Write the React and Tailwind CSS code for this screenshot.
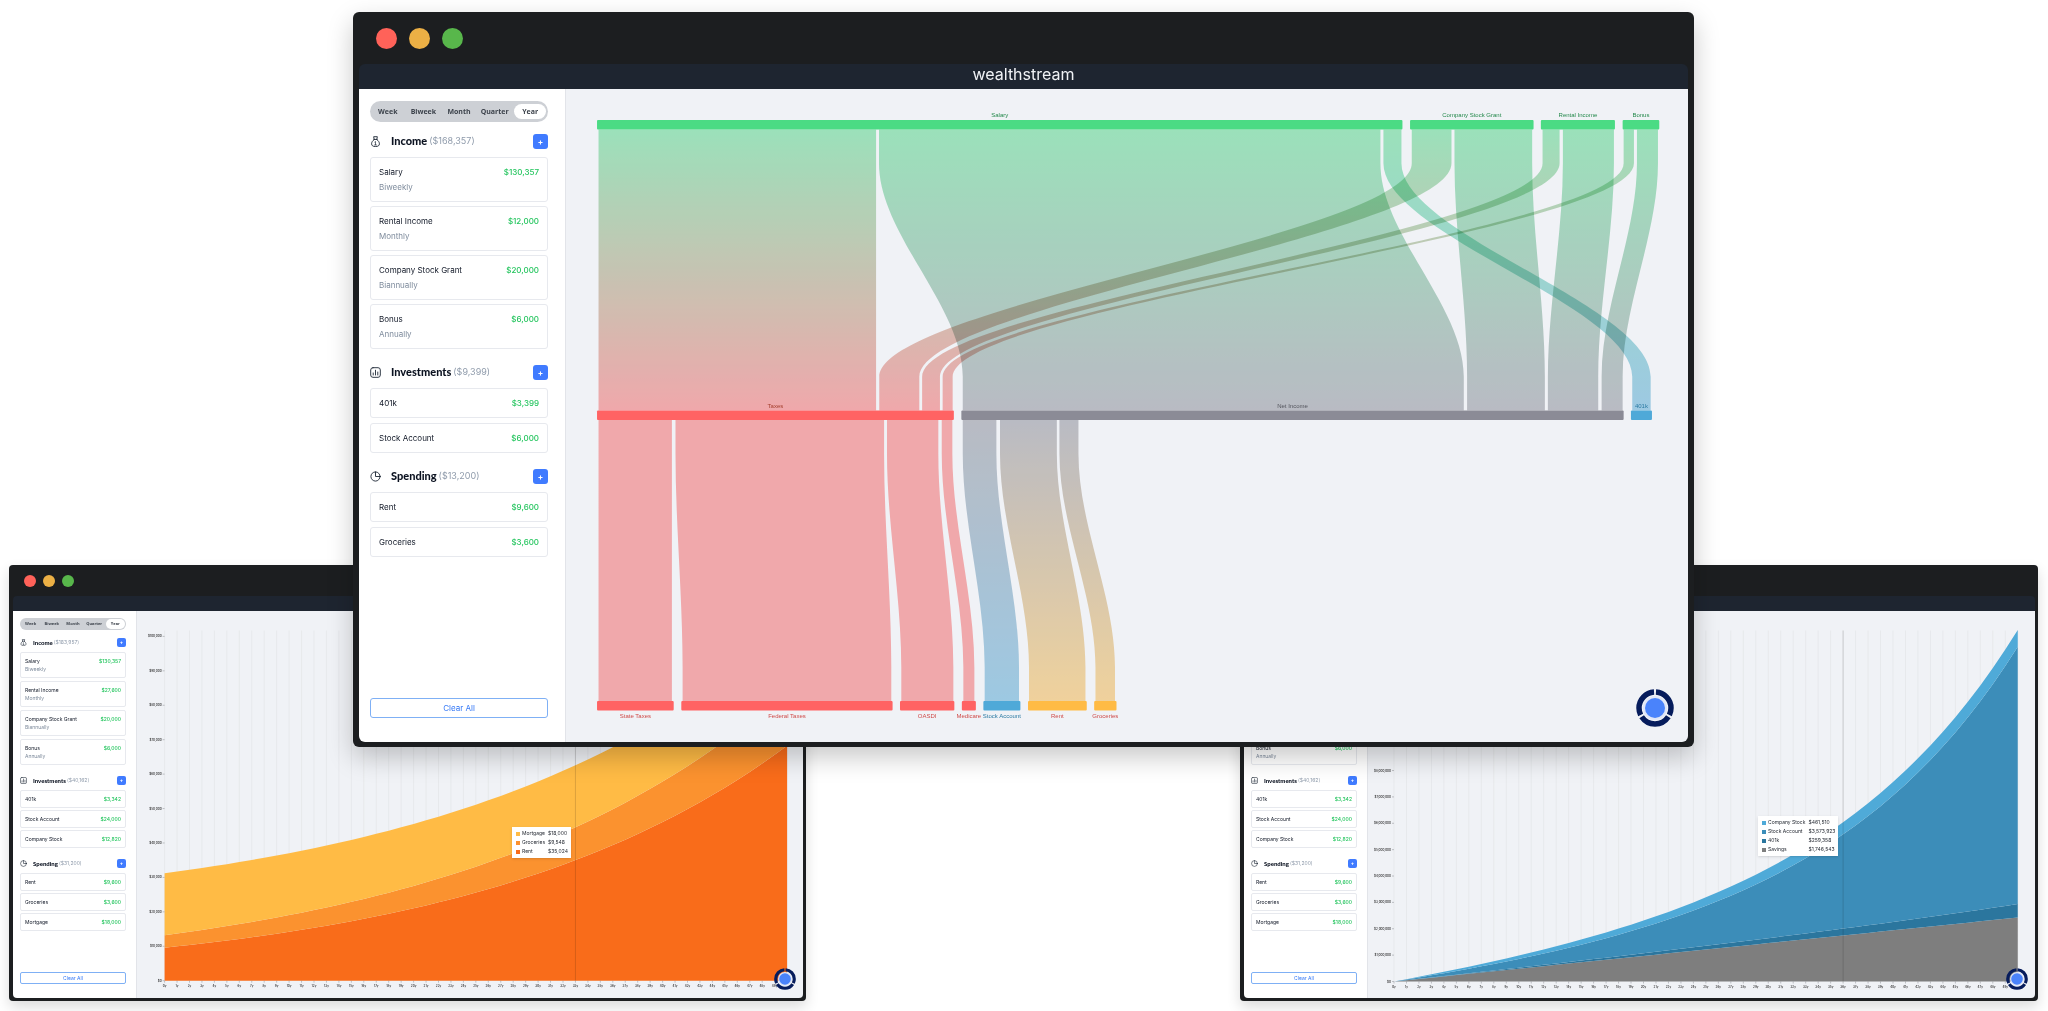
import React, { useState } from 'react';
import clsx from 'clsx';

const PERIODS = ['Week', 'Biweek', 'Month', 'Quarter', 'Year'];

const overviewGroups = [
  {
    title: 'Income',
    total: '$168,357',
    items: [
      { name: 'Salary', amount: '$130,357', every: 'Biweekly' },
      { name: 'Rental Income', amount: '$12,000', every: 'Monthly' },
      { name: 'Company Stock Grant', amount: '$20,000', every: 'Biannually' },
      { name: 'Bonus', amount: '$6,000', every: 'Annually' },
    ],
  },
  {
    title: 'Investments',
    total: '$9,399',
    items: [
      { name: '401k', amount: '$3,399' },
      { name: 'Stock Account', amount: '$6,000' },
    ],
  },
  {
    title: 'Spending',
    total: '$13,200',
    items: [
      { name: 'Rent', amount: '$9,600' },
      { name: 'Groceries', amount: '$3,600' },
    ],
  },
];

const projectionGroups = [
  {
    title: 'Income',
    total: '$183,957',
    items: [
      { name: 'Salary', amount: '$130,357', every: 'Biweekly' },
      { name: 'Rental Income', amount: '$27,600', every: 'Monthly' },
      { name: 'Company Stock Grant', amount: '$20,000', every: 'Biannually' },
      { name: 'Bonus', amount: '$6,000', every: 'Annually' },
    ],
  },
  {
    title: 'Investments',
    total: '$40,162',
    items: [
      { name: '401k', amount: '$3,342' },
      { name: 'Stock Account', amount: '$24,000' },
      { name: 'Company Stock', amount: '$12,820' },
    ],
  },
  {
    title: 'Spending',
    total: '$31,200',
    items: [
      { name: 'Rent', amount: '$9,600' },
      { name: 'Groceries', amount: '$3,600' },
      { name: 'Mortgage', amount: '$18,000' },
    ],
  },
];

function GroupIcon({ title, className }) {
  return (
    <svg
      viewBox="0 0 24 24"
      className={className}
      fill="none"
      stroke="#1f2937"
      strokeWidth="2"
      strokeLinecap="round"
      strokeLinejoin="round"
      aria-hidden="true"
    >
      {title === 'Income' && (
        <>
          <path d="M9 7 8 1.5h8L15 7" />
          <path d="M8.5 7.5h7" />
          <path d="M9 8c-3.5 2.500-5.500 5.500-5.500 9 0 3.800 2.500 6 8.500 6s8.500-2.200 8.500-6c0-3.500-2-6.500-5.500-9" />
          <path d="M10.500 13 12 12v7M10 19.500h4" strokeWidth="1.500" />
        </>
      )}
      {title === 'Investments' && (
        <>
          <rect x="1.500" y="1.500" width="21" height="21" rx="5" />
          <path d="M7 13v4.500M12 7v10.500M17 11v6.500" />
        </>
      )}
      {title === 'Spending' && (
        <>
          <circle cx="12" cy="12" r="10" />
          <path d="M12 2v10h10" />
        </>
      )}
    </svg>
  );
}

function PeriodPicker({ small }) {
  const [period, setPeriod] = useState('Year');

  return (
    <div
      className={clsx(
        'grid grid-cols-5 rounded-full bg-[#cdd0d5] font-["Open_Sans",sans-serif] font-bold text-[#3d434c]',
        small ? 'h-3 py-px text-[4px] leading-[10px]' : 'h-[21px] py-[3px] text-[7px] leading-[15px]'
      )}
    >
      {PERIODS.map((p) => (
        <button
          key={p}
          type="button"
          onClick={() => setPeriod(p)}
          className={clsx('rounded-full text-center', small ? 'mx-px' : 'mx-[2px]', p === period && 'bg-white')}
        >
          {p}
        </button>
      ))}
    </div>
  );
}

function Group({ group, small }) {
  const twoLine = group.items.some((i) => i.every);

  return (
    <section>
      <div className={clsx('flex items-center', small ? 'mb-[5px] h-[9px]' : 'mb-2 h-[15px]')}>
        <GroupIcon title={group.title} className={small ? 'size-[7px]' : 'size-[11px]'} />
        <h2
          className={clsx(
            'font-["Lato",sans-serif] font-black text-[#0b1220]',
            small ? 'ml-[6px] text-[6px]' : 'ml-[10px] text-[11px]'
          )}
        >
          {group.title}
        </h2>
        <span
          className={clsx(
            'font-["Inter",sans-serif] text-[#8f9bab]',
            small ? 'ml-px text-[5px]' : 'ml-[2px] pb-[2px] text-[9px]'
          )}
        >
          ({group.total})
        </span>
        <button
          type="button"
          aria-label={`Add ${group.title}`}
          className={clsx(
            'ml-auto flex items-center justify-center bg-[#407bff] font-bold text-white',
            small ? 'size-[9px] rounded-[2px] text-[5px]' : 'size-[15px] rounded-[3px] text-[8px]'
          )}
        >
          +
        </button>
      </div>
      <ul className={clsx('flex flex-col', small ? (twoLine ? 'gap-[3px]' : 'gap-[2px]') : twoLine ? 'gap-1' : 'gap-[5px]')}>
        {group.items.map((item) => (
          <li
            key={item.name}
            className={clsx(
              'border border-[#e7e9ee]',
              small ? 'rounded-[2px] px-1 py-1 text-[5px] leading-[8px]' : 'rounded-[3px] px-2 py-[7px] text-[8px] leading-[14px]'
            )}
          >
            <div className="flex justify-between">
              <span className="text-[#111827]">{item.name}</span>
              <span className="font-medium text-[#24c55e]">{item.amount}</span>
            </div>
            {item.every && <div className={clsx('text-[#7f8c9d]', !small && 'mt-px')}>{item.every}</div>}
          </li>
        ))}
      </ul>
    </section>
  );
}

function Sidebar({ groups, small }) {
  return (
    <aside
      className={clsx(
        'flex shrink-0 flex-col border-r border-[#e2e4e9] bg-white',
        small ? 'w-[124px] pt-[7px] pr-[10px] pb-[14px] pl-[7px]' : 'w-[207px] pt-3 pr-[17px] pb-6 pl-[11px]'
      )}
    >
      <PeriodPicker small={small} />
      <div className={clsx('flex flex-col', small ? 'mt-2 gap-[11px]' : 'mt-3 gap-4')}>
        {groups.map((g) => (
          <Group key={g.title} group={g} small={small} />
        ))}
      </div>
      <button
        type="button"
        className={clsx(
          'mt-auto border border-[#7fb0f5] text-[#3478f6]',
          small ? 'h-3 rounded-[2px] text-[5px] leading-[10px]' : 'h-5 rounded-[3px] text-[8px] leading-[18px]'
        )}
      >
        Clear All
      </button>
    </aside>
  );
}

function HelpButton({ small }) {
  return (
    <button
      type="button"
      aria-label="Help"
      className={clsx('absolute', small ? 'right-[7px] bottom-2 size-[22px]' : 'right-[14px] bottom-[15px] size-[38px]')}
    >
      <svg viewBox="0 0 38 38" className="size-full">
        <circle cx="19" cy="19" r="12" fill="#dfe6f8" />
        <circle cx="19" cy="19" r="10" fill="#4a83fb" />
        <circle
          cx="19"
          cy="19"
          r="16"
          fill="none"
          stroke="#061c5c"
          strokeWidth="5.500"
          pathLength="300"
          strokeDasharray="94 6"
          strokeDashoffset="-3"
          transform="rotate(-90 19 19)"
        />
      </svg>
    </button>
  );
}

function Window({ title, groups, small, className, children }) {
  return (
    <div
      className={clsx(
        'absolute bg-[#1c1e20]',
        small
          ? 'rounded-[4px] pr-[3px] pb-[3px] pl-1 shadow-[0_6px_14px_rgba(0,0,0,0.14)]'
          : 'rounded-[6px] px-[6px] pb-[5px] shadow-[0_10px_26px_rgba(0,0,0,0.22)]',
        className
      )}
    >
      <div className={clsx('flex items-center', small ? 'h-[31px] gap-[7px] pl-[11px]' : 'h-[52px] gap-3 pl-[17px]')}>
        {['bg-[#ff6259]', 'bg-[#ecb045]', 'bg-[#58b74b]'].map((c) => (
          <span key={c} className={clsx('rounded-full', c, small ? 'size-3' : 'size-[21px]')} />
        ))}
      </div>
      <header
        className={clsx(
          'flex justify-center bg-[#1e2530] font-["Inter",sans-serif] text-[#f0f2f5]',
          small ? 'h-[15px] rounded-t-[4px] text-[9px]' : 'h-[25px] rounded-t-[6px] text-[16px] leading-[21px]'
        )}
      >
        {title}
      </header>
      <div className={clsx('flex overflow-hidden', small ? 'rounded-b-[4px]' : 'rounded-b-[6px]')}>
        <Sidebar groups={groups} small={small} />
        <main className="relative min-w-0 flex-1 bg-[#f0f2f6]">
          {children}
          <HelpButton small={small} />
        </main>
      </div>
    </div>
  );
}

/* ---------- sankey ---------- */

const GREEN = '#4bdb84';
const RED = '#ff6363';
const GREY = '#8b8b96';
const BLUE = '#4fa9d8';
const YELLOW = '#ffbb45';

const NODE_H = 9.5;
const ROWS = [31, 321.25, 611.5];

const nodes = [
  { name: 'Salary', row: 0, x: [31, 835.7], color: GREEN, text: '#24894b' },
  { name: 'Company Stock Grant', row: 0, x: [843.3, 966.7], color: GREEN, text: '#24894b' },
  { name: 'Rental Income', row: 0, x: [974, 1048], color: GREEN, text: '#24894b' },
  { name: 'Bonus', row: 0, x: [1055.7, 1092.3], color: GREEN, text: '#24894b' },
  { name: 'Taxes', row: 1, x: [31, 387.5], color: RED, text: '#a5402f' },
  { name: 'Net Income', row: 1, x: [395, 1056.7], color: GREY, text: '#55565e' },
  { name: '401k', row: 1, x: [1064, 1085], color: BLUE, text: '#2c7ba3' },
  { name: 'State Taxes', row: 2, x: [31, 107.6], color: RED, text: '#cf4a48' },
  { name: 'Federal Taxes', row: 2, x: [115.2, 326.3], color: RED, text: '#cf4a48' },
  { name: 'OASDI', row: 2, x: [333.7, 388], color: RED, text: '#cf4a48' },
  { name: 'Medicare', row: 2, x: [395.5, 409.5], color: RED, text: '#cf4a48' },
  { name: 'Stock Account', row: 2, x: [417, 454], color: BLUE, text: '#2c7ba3' },
  { name: 'Rent', row: 2, x: [461.6, 520.3], color: YELLOW, text: '#cf4a48' },
  { name: 'Groceries', row: 2, x: [527.7, 550], color: YELLOW, text: '#cf4a48' },
];

const links = [
  { row: 0, a: [32.5, 309.8], b: [32.5, 309.8], from: GREEN, to: RED },
  { row: 0, a: [312.7, 813.7], b: [396.4, 897], from: GREEN, to: GREY },
  { row: 0, a: [816.7, 834.7], b: [1065.3, 1083.7], from: GREEN, to: BLUE },
  { row: 0, a: [845, 884.7], b: [313, 353], from: GREEN, to: RED },
  { row: 0, a: [887.7, 965.3], b: [900.3, 978], from: GREEN, to: GREY },
  { row: 0, a: [975.7, 992.7], b: [355.8, 373.6], from: GREEN, to: RED },
  { row: 0, a: [996, 1047], b: [981, 1031.3], from: GREEN, to: GREY },
  { row: 0, a: [1056.7, 1067], b: [376.3, 386.3], from: GREEN, to: RED },
  { row: 0, a: [1070, 1091], b: [1034.7, 1055.7], from: GREEN, to: GREY },
  { row: 1, a: [32.5, 105.8], b: [32.5, 105.8], from: RED, to: RED },
  { row: 1, a: [109.4, 317.8], b: [116.5, 325], from: RED, to: RED },
  { row: 1, a: [320.7, 372], b: [335, 387], from: RED, to: RED },
  { row: 1, a: [375.4, 386], b: [397, 408], from: RED, to: RED },
  { row: 1, a: [396.4, 430], b: [418.3, 452.6], from: GREY, to: BLUE },
  { row: 1, a: [433.6, 490.4], b: [462.6, 519], from: GREY, to: YELLOW },
  { row: 1, a: [493, 512], b: [529, 548.5], from: GREY, to: YELLOW },
];

// straight run at both ends, smooth curve between them
function linkPath({ row, a, b }) {
  const top = ROWS[row] + NODE_H;
  const bottom = ROWS[row + 1];
  const run = (bottom - top) * 0.12;
  const y1 = top + run;
  const y2 = bottom - run;
  const k = (y2 - y1) / 3;
  return [
    `M${a[0]} ${top}V${y1}`,
    `C${a[0]} ${y1 + k} ${b[0]} ${y2 - k} ${b[0]} ${y2}`,
    `V${bottom}H${b[1]}V${y2}`,
    `C${b[1]} ${y2 - k} ${a[1]} ${y1 + k} ${a[1]} ${y1}`,
    `V${top}Z`,
  ].join('');
}

function SankeyChart() {
  return (
    <svg viewBox="0 0 1121 652" className="block h-auto w-full" role="img" aria-label="Cash flow">
      <defs>
        {links.map((l, i) => (
          <linearGradient
            key={i}
            id={`flow-${i}`}
            gradientUnits="userSpaceOnUse"
            x1="0"
            x2="0"
            y1={ROWS[l.row] + NODE_H}
            y2={ROWS[l.row + 1]}
          >
            <stop offset="0" stopColor={l.from} />
            <stop offset="1" stopColor={l.to} />
          </linearGradient>
        ))}
      </defs>
      <g>
        {links.map((l, i) => (
          <path key={i} d={linkPath(l)} fill={`url(#flow-${i})`} className="opacity-50 mix-blend-multiply" />
        ))}
      </g>
      {nodes.map((n) => (
        <g key={n.name}>
          <rect x={n.x[0]} y={ROWS[n.row]} width={n.x[1] - n.x[0]} height={NODE_H} rx="1" fill={n.color} />
          <text
            x={(n.x[0] + n.x[1]) / 2}
            y={n.row === 2 ? ROWS[2] + 17 : ROWS[n.row] - 3}
            textAnchor="middle"
            fill={n.text}
            className='font-["Liberation_Sans",Arial,sans-serif] text-[6px]'
          >
            {n.name}
          </text>
        </g>
      ))}
    </svg>
  );
}

/* ---------- stacked area ---------- */

const YEARS = Array.from({ length: 51 }, (_, i) => i);

const grow = (base, rate) => (n) => base * (1 + rate) ** n;
const save = (yearly, rate) => (n) => (rate ? (yearly * ((1 + rate) ** n - 1)) / rate : yearly * n);

const spendingSeries = [
  { name: 'Rent', color: '#f96c1a', value: grow(9600, 0.04), label: '$35,024' },
  { name: 'Groceries', color: '#fb922f', value: grow(3600, 0.03), label: '$9,548' },
  { name: 'Mortgage', color: '#ffbb45', value: grow(18000, 0), label: '$18,000' },
];

const savingsSeries = [
  { name: 'Savings', color: '#7e7e7e', value: save(48515, 0), label: '$1,746,543' },
  { name: '401k', color: '#2b769e', value: save(3342, 0.04), label: '$259,358' },
  { name: 'Stock Account', color: '#3c8db9', value: save(24000, 0.07), label: '$3,573,923' },
  { name: 'Company Stock', color: '#4faad8', value: save(12820, 0), label: '$461,510' },
];

function AreaChart({ series, width, x0, step, y0, unit, unitPx, ticks, hover }) {
  const x = (n) => x0 + n * step;
  const y = (v) => y0 - (v / unit) * unitPx;

  let base = YEARS.map(() => 0);
  const layers = series.map((s) => {
    const top = base.map((b, n) => b + s.value(n));
    const up = top.map((v, n) => `${x(n)},${y(v)}`);
    const down = base.map((v, n) => `${x(n)},${y(v)}`).reverse();
    base = top;
    return { ...s, points: [...up, ...down].join(' ') };
  });

  return (
    <svg viewBox={`0 0 ${width} 387`} className='block h-auto w-full font-["Inter",sans-serif] text-[3px] font-medium'>
      {YEARS.map((n) => (
        <line key={n} x1={x(n)} x2={x(n)} y1="19.500" y2={y0} stroke="#e7e9ec" />
      ))}
      {layers.map((l) => (
        <polygon key={l.name} points={l.points} fill={l.color} />
      ))}
      <line x1={x(hover)} x2={x(hover)} y1="19.500" y2={y0} stroke="#000" strokeOpacity="0.14" />
      {YEARS.map((n) => (
        <g key={n}>
          <line x1={x(n)} x2={x(n)} y1={y0} y2={y0 + 2} stroke="#8a8d92" strokeWidth="0.500" />
          {n < 50 && (
            <text x={x(n)} y={y0 + 6} textAnchor="middle" fill="#222">
              {n}y
            </text>
          )}
        </g>
      ))}
      {ticks.map((t) => (
        <g key={t}>
          <line x1={x0 - 2} x2={x0} y1={y(t)} y2={y(t)} stroke="#8a8d92" strokeWidth="0.500" />
          <text x={x0 - 3} y={y(t) + 1} textAnchor="end" fill="#222">
            ${t.toLocaleString('en-US')}
          </text>
        </g>
      ))}
    </svg>
  );
}

function Tooltip({ series, className }) {
  return (
    <table className={clsx('absolute bg-white text-[5px] leading-[9px] text-[#1f242d] shadow-sm', className)}>
      <tbody className="before:block before:h-[2px] after:block after:h-[2px]">
        {[...series].reverse().map((s) => (
          <tr key={s.name}>
            <td className="pr-[2px] pl-1">
              <span className="block size-1" style={{ backgroundColor: s.color }} />
            </td>
            <td className="pr-[3px] whitespace-nowrap">{s.name}</td>
            <td className="pr-[3px]">{s.label}</td>
          </tr>
        ))}
      </tbody>
    </table>
  );
}

const spendingTicks = [0, 1, 2, 3, 4, 5, 6, 7, 8, 9, 10].map((n) => n * 10000);
const savingsTicks = [0, 1, 2, 3, 4, 5, 6, 7, 8, 9, 10, 11, 12, 13].map((n) => n * 1000000);

export default function App() {
  return (
    <div className='relative min-h-screen overflow-hidden bg-white font-["Inter",sans-serif]'>
      <Window small groups={projectionGroups} className="top-[565px] left-[9px] w-[797px]">
        <AreaChart
          series={spendingSeries}
          width={666}
          x0={27.6}
          step={12.45}
          y0={369.7}
          unit={10000}
          unitPx={34.43}
          ticks={spendingTicks}
          hover={33}
        />
        <Tooltip series={spendingSeries} className="top-[216px] left-[375px]" />
      </Window>

      <Window small groups={projectionGroups} className="top-[565px] right-[10px] w-[798px]">
        <AreaChart
          series={savingsSeries}
          width={667}
          x0={26}
          step={12.475}
          y0={370.5}
          unit={1000000}
          unitPx={26.37}
          ticks={savingsTicks}
          hover={36}
        />
        <Tooltip series={savingsSeries} className="top-[205px] left-[390px]" />
      </Window>

      <Window title="wealthstream" groups={overviewGroups} className="top-3 right-[354px] left-[353px]">
        <SankeyChart />
      </Window>
    </div>
  );
}
